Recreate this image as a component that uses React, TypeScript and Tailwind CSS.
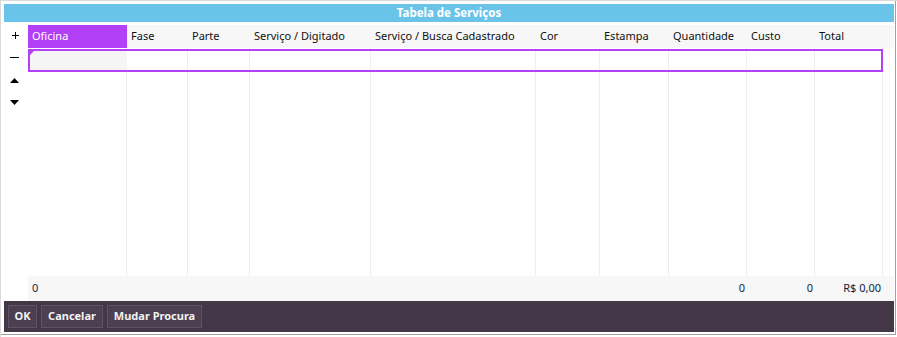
const columns = [
  { label: "Oficina", width: 99 },
  { label: "Fase", width: 61 },
  { label: "Parte", width: 62 },
  { label: "Serviço / Digitado", width: 121 },
  { label: "Serviço / Busca Cadastrado", width: 165 },
  { label: "Cor", width: 64 },
  { label: "Estampa", width: 69 },
  { label: "Quantidade", width: 78 },
  { label: "Custo", width: 68 },
  { label: "Total", width: 68 },
];

const totals: Record<number, string> = { 0: "0", 7: "0", 8: "0", 9: "R$ 0,00" };

const buttons = [
  { label: "OK", w: "w-[29px]" },
  { label: "Cancelar", w: "w-[62px]" },
  { label: "Mudar Procura", w: "w-[95px]" },
];

export default function App() {
  return (
    <div
      className="h-[337px] w-[897px] border-l border-t border-[#dadada] bg-white"
      style={{ fontFamily: '"Noto Sans", "Open Sans", sans-serif' }}
    >
      <div className="flex h-[334px] w-[895px] flex-col border-b border-r border-[#a0a0a0] pl-[3px] pt-[3px]">
        <div className="flex h-[18px] w-[890px] items-center justify-center bg-[#6ac4e9] text-[11.5px] font-bold text-white">
          Tabela de Serviços
        </div>

        <div className="mt-[3px] flex w-[890px] flex-1">
          {/* barra lateral */}
          <div className="flex w-[24px] flex-col items-center pt-[7px] text-black">
            <svg className="ml-[-2px]" width="7" height="7" viewBox="0 0 7 7" shapeRendering="crispEdges">
              <path d="M3 0 H4 V7 H3 Z M0 3 H7 V4 H0 Z" fill="#000" />
            </svg>
            <svg className="ml-[-3px] mt-[18px]" width="9" height="1" viewBox="0 0 9 1" shapeRendering="crispEdges">
              <path d="M0 0 H9 V1 H0 Z" fill="#000" />
            </svg>
            <svg className="ml-[-3px] mt-[20px]" width="9" height="5" viewBox="0 0 9 5">
              <path d="M0 5 L4.5 0 L9 5 Z" fill="#000" />
            </svg>
            <svg className="ml-[-3px] mt-[17px]" width="9" height="5" viewBox="0 0 9 5">
              <path d="M0 0 L4.5 5 L9 0 Z" fill="#000" />
            </svg>
          </div>

          {/* tabela */}
          <div className="flex flex-1 flex-col">
            <div className="flex h-[23px] bg-[#f7f7f7] text-[11px] text-[#111]">
              {columns.map((c, i) => (
                <div
                  key={c.label}
                  style={{ width: c.width }}
                  className={
                    i === 0
                      ? "flex items-center bg-[#b340f7] pl-[4px] text-white"
                      : "flex items-center pl-[4px]"
                  }
                >
                  {c.label}
                </div>
              ))}
            </div>

            <div className="relative flex flex-1">
              {columns.map((c) => (
                <div key={c.label} style={{ width: c.width }} className="border-r border-[#eeeeee]" />
              ))}
              {/* linha selecionada */}
              <div className="absolute left-0 top-[1px] flex h-[23px] w-[855px] border-2 border-[#b340f7]">
                <div className="relative h-full w-[97px] bg-[#f5f5f5]">
                  <div className="absolute left-0 top-0 h-0 w-0 border-r-[4px] border-t-[4px] border-r-transparent border-t-[#b340f7]" />
                </div>
              </div>
            </div>

            <div className="flex h-[25px] bg-[#f7f7f7] text-[11px] text-[#0f1f3d]">
              {columns.map((c, i) => (
                <div
                  key={c.label}
                  style={{ width: c.width }}
                  className={
                    i === 0
                      ? "flex items-center pl-[4px]"
                      : "flex items-center justify-end pr-[2px]"
                  }
                >
                  {totals[i] ?? ""}
                </div>
              ))}
            </div>
          </div>
        </div>

        <div className="flex h-[31px] w-[890px] items-center gap-[4px] bg-[#433748] pl-[4px]">
          {buttons.map((b) => (
            <button
              key={b.label}
              className={`${b.w} h-[23px] border border-[#5d5361] bg-[#4b3f50] text-center text-[11px] font-bold text-[#f2f2f2]`}
            >
              {b.label}
            </button>
          ))}
        </div>
        <div className="h-[2px]" />
      </div>
    </div>
  );
}
